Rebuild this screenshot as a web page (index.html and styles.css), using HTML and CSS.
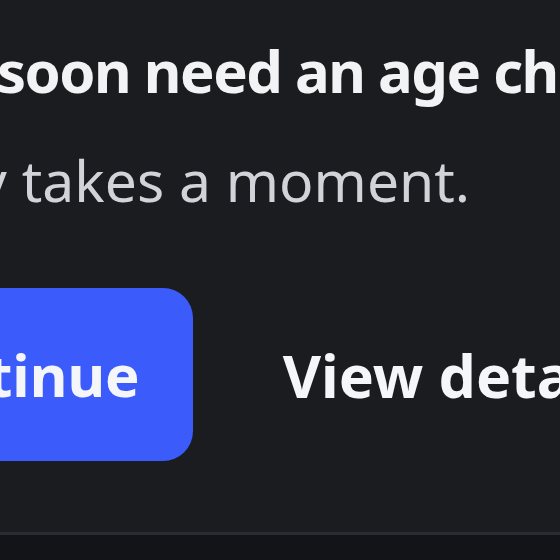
FILE: index.html
```html
<!DOCTYPE html>
<html lang="en">
<head>
<meta charset="utf-8">
<title>Age check</title>
<link rel="stylesheet" href="styles.css">
</head>
<body>
<main class="card">
  <div class="content">
    <h1 class="title">You'll soon need an age check</h1>
    <p class="subtitle">It usually takes a moment.</p>
    <div class="actions">
      <button class="btn btn-primary">Continue</button>
      <button class="btn btn-link">View details</button>
    </div>
  </div>
</main>
<footer class="footer"></footer>
</body>
</html>
```
FILE: styles.css
```css
html, body {
  margin: 0;
  padding: 0;
}
body {
  width: 560px;
  height: 560px;
  overflow: hidden;
  background: #1b1c20;
  font-family: "Noto Sans", "Open Sans", sans-serif;
  display: flex;
  flex-direction: column;
}
.card {
  flex: 1;
  padding-top: 36px;
  overflow: hidden;
}
.content {
  margin-left: -236px;
  white-space: nowrap;
}
.title {
  margin: 0 0 0 71px;
  font-size: 58px;
  line-height: 70px;
  letter-spacing: -1.5px;
  font-weight: 700;
  color: #f3f3f6;
}
.subtitle {
  margin: 39px 0 0;
  font-size: 57px;
  line-height: 70px;
  font-weight: 400;
  color: #d2d3d8;
}
.actions {
  margin: 73px 0 0 46px;
  display: flex;
  align-items: center;
  gap: 90px;
}
.btn {
  font-family: inherit;
  font-size: 58px;
  font-weight: 700;
  border: 0;
  color: #f5f6fa;
  height: 173px;
  display: flex;
  align-items: center;
  padding: 0 53px 0 66px;
}
.btn-primary {
  background: #3b5cfb;
  border-radius: 30px;
}
.btn-link {
  background: transparent;
  padding: 0;
  font-size: 59px;
}
.footer {
  height: 25px;
  border-top: 3px solid #2b2c31;
  background: #131418;
}
```
